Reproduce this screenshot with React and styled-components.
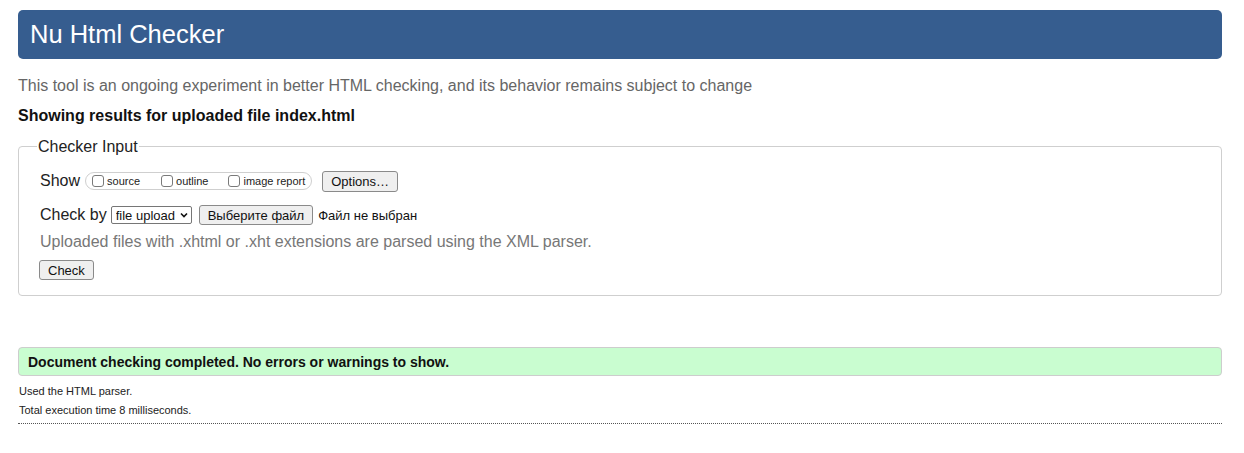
import React from "react";
import styled, { createGlobalStyle } from "styled-components";

const Global = createGlobalStyle`
  html, body { margin: 0; padding: 0; background: #fff; }
  body {
    font-family: "Liberation Sans", Arial, Helvetica, sans-serif;
    color: #111;
  }
`;

const Page = styled.div`
  padding: 10px 22px 0 18px;
  display: flex;
  flex-direction: column;
`;

const Header = styled.h1`
  margin: 0;
  height: 49px;
  line-height: 48px;
  padding: 0 12px;
  background: #365d8f;
  color: #fff;
  font-size: 25.5px;
  font-weight: normal;
  border-radius: 5px;
`;

const Intro = styled.p`
  margin: 17px 0 0;
  font-size: 16px;
  line-height: 19px;
  color: #666;
`;

const Results = styled.p`
  margin: 11px 0 0;
  font-size: 16px;
  line-height: 19px;
  font-weight: bold;
  color: #111;
`;

const Fieldset = styled.fieldset`
  margin: 12px 0 0;
  padding: 0 20px 15px 21px;
  border: 1px solid #cfcfcf;
  border-radius: 4px;
  display: flex;
  flex-direction: column;
  min-width: 0;
`;

const Legend = styled.legend`
  margin-left: -3px;
  padding: 0 1px;
  font-size: 16px;
  line-height: 19px;
  color: #222;
`;

const Row = styled.div`
  display: flex;
  align-items: center;
  height: 22px;
  margin-top: ${(p) => p.$mt}px;
  font-size: 16px;
  color: #222;
`;

const RowLabel = styled.span`
  font-size: 16px;
  margin-right: ${(p) => p.$gap}px;
`;

const CheckGroup = styled.div`
  display: flex;
  align-items: center;
  height: 18px;
  padding: 0 6px 0 6px;
  border: 1px solid #cfcfcf;
  border-radius: 9px;
  margin-right: 10px;
  box-sizing: border-box;
`;

const CheckLabel = styled.label`
  display: flex;
  align-items: center;
  font-size: 11px;
  color: #222;
  margin-right: ${(p) => p.$mr || 0}px;
`;

const Box = styled.input.attrs({ type: "checkbox" })`
  appearance: none;
  -webkit-appearance: none;
  width: 12px;
  height: 12px;
  margin: 0 3px 0 0;
  border: 1px solid #7a7a7a;
  border-radius: 3px;
  background: #fff;
  box-sizing: border-box;
`;

const Button = styled.button`
  font-family: "Liberation Sans", Arial, Helvetica, sans-serif;
  font-size: 13px;
  height: ${(p) => p.$h || 21}px;
  padding: 0 ${(p) => p.$px || 7}px;
  background: #efefef;
  color: #111;
  border: 1px solid #8a8a8a;
  border-radius: 3px;
  line-height: 1;
  cursor: default;
  margin-right: ${(p) => p.$mr || 0}px;
`;

const SelectBox = styled.div`
  display: flex;
  align-items: center;
  height: 18px;
  box-sizing: border-box;
  border: 1px solid #767676;
  border-radius: 2px;
  padding: 0 3px 0 0;
  margin-right: 7px;
  background: #fff;
`;

const Select = styled.select`
  appearance: none;
  -webkit-appearance: none;
  border: none;
  background: transparent;
  font-family: "Liberation Sans", Arial, Helvetica, sans-serif;
  font-size: 13px;
  color: #111;
  padding: 0 4px 0 4px;
  height: 16px;
  outline: none;
`;

const FileNote = styled.span`
  font-size: 13px;
  color: #111;
  margin-left: 5px;
`;

const Hint = styled.p`
  margin: 6px 0 0;
  font-size: 16px;
  line-height: 19px;
  color: #777;
`;

const CheckRow = styled.div`
  display: flex;
  margin-top: 9px;
  margin-left: -1px;
`;

const Success = styled.div`
  margin-top: 51px;
  height: 29px;
  box-sizing: border-box;
  display: flex;
  align-items: center;
  padding: 0 9px;
  background: #c9fdd0;
  border: 1px solid #cdcdcd;
  border-radius: 4px;
  font-size: 14px;
  font-weight: bold;
  color: #111;
`;

const Details = styled.div`
  margin-top: 6px;
  padding: 0 0 3px 1px;
  border-bottom: 1px dotted #555;
  font-size: 11px;
  line-height: 19px;
  color: #222;
`;

const Chevron = () => (
  <svg width="8" height="6" viewBox="0 0 8 6" aria-hidden="true">
    <path d="M1 1.5 L4 4.5 L7 1.5" fill="none" stroke="#111" strokeWidth="1.6" />
  </svg>
);

export default function App() {
  return (
    <>
      <Global />
      <Page>
        <Header>Nu Html Checker</Header>
        <Intro>
          This tool is an ongoing experiment in better HTML checking, and its
          behavior remains subject to change
        </Intro>
        <Results>Showing results for uploaded file index.html</Results>
        <Fieldset>
          <Legend>Checker Input</Legend>
          <Row $mt={14}>
            <RowLabel $gap={5}>Show</RowLabel>
            <CheckGroup>
              <CheckLabel $mr={21}>
                <Box />
                source
              </CheckLabel>
              <CheckLabel $mr={20}>
                <Box />
                outline
              </CheckLabel>
              <CheckLabel>
                <Box />
                image report
              </CheckLabel>
            </CheckGroup>
            <Button $h={21} $px={8}>Options…</Button>
          </Row>
          <Row $mt={12}>
            <RowLabel $gap={4}>Check by</RowLabel>
            <SelectBox>
              <Select defaultValue="file">
                <option value="file">file upload</option>
                <option value="address">address</option>
                <option value="text">text input</option>
              </Select>
              <Chevron />
            </SelectBox>
            <Button $h={20} $px={8}>Выберите файл</Button>
            <FileNote>Файл не выбран</FileNote>
          </Row>
          <Hint>
            Uploaded files with .xhtml or .xht extensions are parsed using the
            XML parser.
          </Hint>
          <CheckRow>
            <Button $h={20} $px={8}>Check</Button>
          </CheckRow>
        </Fieldset>
        <Success>Document checking completed. No errors or warnings to show.</Success>
        <Details>
          <div>Used the HTML parser.</div>
          <div>Total execution time 8 milliseconds.</div>
        </Details>
      </Page>
    </>
  );
}
